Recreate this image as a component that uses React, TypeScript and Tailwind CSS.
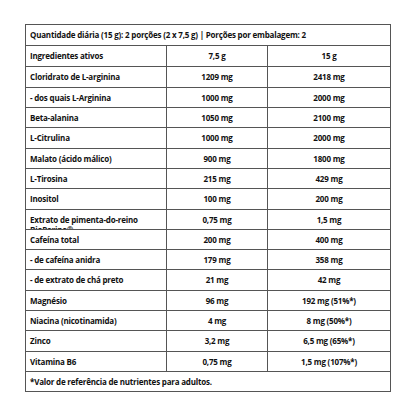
const rows: [string, string, string][] = [
  ["Cloridrato de L-arginina", "1209 mg", "2418 mg"],
  ["- dos quais L-Arginina", "1000 mg", "2000 mg"],
  ["Beta-alanina", "1050 mg", "2100 mg"],
  ["L-Citrulina", "1000 mg", "2000 mg"],
  ["Malato (ácido málico)", "900 mg", "1800 mg"],
  ["L-Tirosina", "215 mg", "429 mg"],
  ["Inositol", "100 mg", "200 mg"],
  ["Extrato de pimenta-do-reino BioPerine®", "0,75 mg", "1,5 mg"],
  ["Cafeína total", "200 mg", "400 mg"],
  ["- de cafeína anidra", "179 mg", "358 mg"],
  ["- de extrato de chá preto", "21 mg", "42 mg"],
  ["Magnésio", "96 mg", "192 mg (51%*)"],
  ["Niacina (nicotinamida)", "4 mg", "8 mg (50%*)"],
  ["Zinco", "3,2 mg", "6,5 mg (65%*)"],
  ["Vitamina B6", "0,75 mg", "1,5 mg (107%*)"],
];

function Row({ cells, first }: { cells: [string, string, string]; first?: boolean }) {
  return (
    <div
      className={`grid grid-cols-[140px_101px_1fr] h-[20.3px] overflow-hidden ${
        first ? "" : "border-t border-[#555]"
      }`}
    >
      <div className="px-[4px] pt-[5px] leading-[10px] overflow-hidden">{cells[0]}</div>
      <div className="border-l border-[#555] pt-[5px] leading-[10px] text-center">{cells[1]}</div>
      <div className="border-l border-[#555] pt-[5px] leading-[10px] text-center">{cells[2]}</div>
    </div>
  );
}

export default function App() {
  return (
    <div className="w-[416px] h-[416px] bg-white flex items-center justify-center">
      <div
        className="w-[366px] border border-[#555] text-[8px] font-bold tracking-[-0.2px] text-[#111]"
        style={{ fontFamily: '"Open Sans", "Liberation Sans", sans-serif' }}
      >
        <div className="h-[20.3px] px-[4px] pt-[5px] leading-[10px] whitespace-nowrap">
          Quantidade diária (15 g): 2 porções (2 x 7,5 g) | Porções por embalagem: 2
        </div>
        <div className="border-t border-[#555]">
          <Row cells={["Ingredientes ativos", "7,5 g", "15 g"]} first />
        </div>
        {rows.map((r) => (
          <Row key={r[0]} cells={r} />
        ))}
        <div className="h-[20.3px] px-[4px] pt-[5px] leading-[10px] border-t border-[#555]">
          *Valor de referência de nutrientes para adultos.
        </div>
      </div>
    </div>
  );
}
